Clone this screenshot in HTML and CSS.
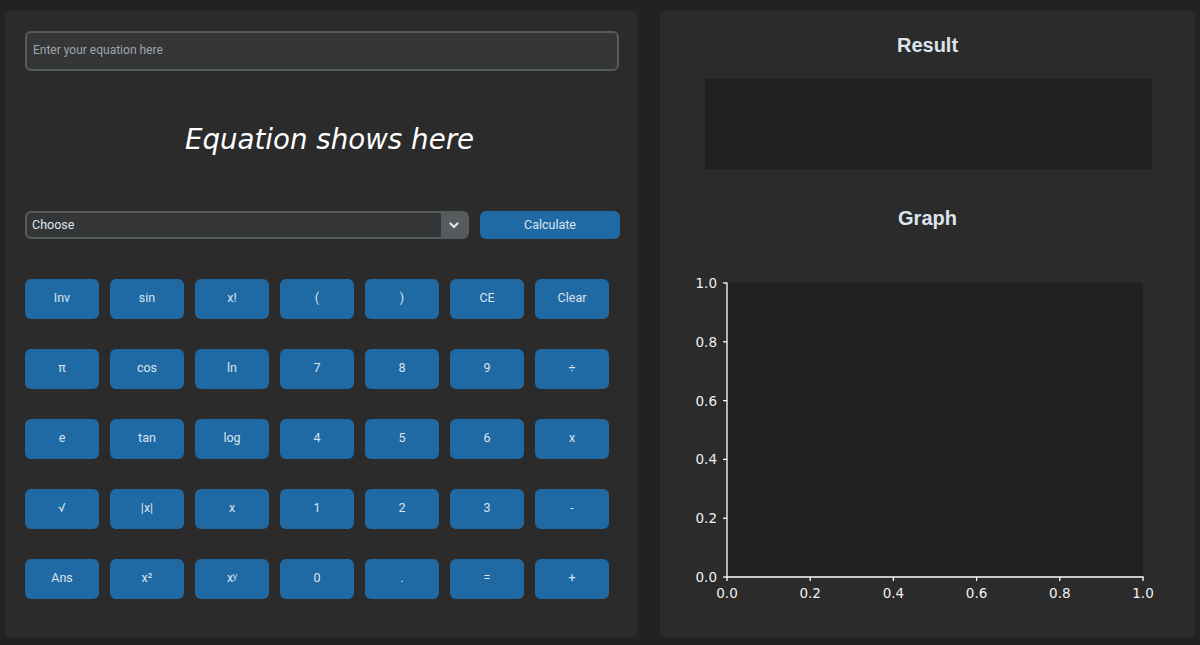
FILE: index.html
```html
<!DOCTYPE html>
<html lang="en">
<head>
<meta charset="utf-8">
<title>Calculator</title>
<link rel="stylesheet" href="styles.css">
</head>
<body>
<main class="app">
  <section class="panel left">
    <input class="eq-input" type="text" placeholder="Enter your equation here">
    <div class="eq-display">Equation shows here</div>
    <div class="action-row">
      <div class="select">
        <span class="select-text">Choose</span>
        <span class="select-arrow">
          <svg width="10" height="7" viewBox="0 0 10 7"><polyline points="1.5,1.5 5,5 8.5,1.5" fill="none" stroke="#dce4ee" stroke-width="2.2" stroke-linecap="round" stroke-linejoin="round"/></svg>
        </span>
      </div>
      <button class="btn calc">Calculate</button>
    </div>
    <div class="keys">
      <button class="btn key">Inv</button><button class="btn key">sin</button><button class="btn key">x!</button><button class="btn key">(</button><button class="btn key">)</button><button class="btn key">CE</button><button class="btn key">Clear</button>
      <button class="btn key">π</button><button class="btn key">cos</button><button class="btn key">ln</button><button class="btn key">7</button><button class="btn key">8</button><button class="btn key">9</button><button class="btn key">÷</button>
      <button class="btn key">e</button><button class="btn key">tan</button><button class="btn key">log</button><button class="btn key">4</button><button class="btn key">5</button><button class="btn key">6</button><button class="btn key">x</button>
      <button class="btn key">√</button><button class="btn key">|x|</button><button class="btn key">x</button><button class="btn key">1</button><button class="btn key">2</button><button class="btn key">3</button><button class="btn key">-</button>
      <button class="btn key">Ans</button><button class="btn key">x²</button><button class="btn key">xʸ</button><button class="btn key">0</button><button class="btn key">.</button><button class="btn key">=</button><button class="btn key">+</button>
    </div>
  </section>
  <section class="panel right">
    <h2 class="title">Result</h2>
    <div class="result-box"></div>
    <h2 class="title graph-title">Graph</h2>
    <svg class="plot" width="535" height="380" viewBox="0 0 535 380">
      <rect x="67" y="53" width="416" height="294" fill="#202020"/>
      <g stroke="#ffffff" stroke-width="1.3" fill="none">
        <line x1="67" y1="52.4" x2="67" y2="347.6"/>
        <line x1="66.4" y1="347" x2="483.6" y2="347"/>
        <line x1="63" y1="53" x2="67" y2="53"/>
        <line x1="63" y1="111.8" x2="67" y2="111.8"/>
        <line x1="63" y1="170.6" x2="67" y2="170.6"/>
        <line x1="63" y1="229.4" x2="67" y2="229.4"/>
        <line x1="63" y1="288.2" x2="67" y2="288.2"/>
        <line x1="63" y1="347" x2="67" y2="347"/>
        <line x1="67" y1="347" x2="67" y2="351"/>
        <line x1="150.2" y1="347" x2="150.2" y2="351"/>
        <line x1="233.4" y1="347" x2="233.4" y2="351"/>
        <line x1="316.6" y1="347" x2="316.6" y2="351"/>
        <line x1="399.8" y1="347" x2="399.8" y2="351"/>
        <line x1="483" y1="347" x2="483" y2="351"/>
      </g>
      <g class="tick-label" text-anchor="end">
        <text x="57" y="58">1.0</text>
        <text x="57" y="116.8">0.8</text>
        <text x="57" y="175.6">0.6</text>
        <text x="57" y="234.4">0.4</text>
        <text x="57" y="293.2">0.2</text>
        <text x="57" y="352">0.0</text>
      </g>
      <g class="tick-label" text-anchor="middle">
        <text x="67" y="368">0.0</text>
        <text x="150.2" y="368">0.2</text>
        <text x="233.4" y="368">0.4</text>
        <text x="316.6" y="368">0.6</text>
        <text x="399.8" y="368">0.8</text>
        <text x="483" y="368">1.0</text>
      </g>
    </svg>
  </section>
</main>
</body>
</html>
```

FILE: styles.css
```css
* {
  box-sizing: border-box;
}

html, body {
  margin: 0;
  padding: 0;
  background: #222222;
}

body {
  width: 1200px;
  height: 645px;
  overflow: hidden;
  font-family: Roboto, "Liberation Sans", sans-serif;
}

.app {
  display: flex;
  gap: 22px;
  padding: 11px 5px 7px 5px;
  height: 645px;
}

.panel {
  background: #2b2b2b;
  border-radius: 6px;
  height: 627px;
}

.left {
  width: 633px;
  padding: 20px 19px 0 20px;
  display: flex;
  flex-direction: column;
}

.eq-input {
  display: block;
  width: 594px;
  height: 40px;
  margin: 0;
  padding: 0 6px 2px 6px;
  background: #343638;
  border: 2px solid #565b5e;
  border-radius: 6px;
  color: #dce4ee;
  font-family: Roboto, "Liberation Sans", sans-serif;
  font-size: 12px;
  outline: none;
}

.eq-input::placeholder {
  color: #a0a4a9;
}

.eq-display {
  margin-top: 52px;
  height: 34px;
  line-height: 34px;
  text-align: center;
  font-family: "DejaVu Sans", sans-serif;
  font-style: italic;
  font-size: 27.7px;
  color: #ffffff;
  padding-left: 15px;
}

.action-row {
  margin-top: 54px;
  display: flex;
  gap: 11px;
  height: 28px;
}

.select {
  flex: none;
  width: 444px;
  height: 28px;
  display: flex;
  background: #343638;
  border: 2px solid #565b5e;
  border-radius: 6px;
  overflow: hidden;
}

.select-text {
  flex: 1;
  padding-left: 5px;
  line-height: 24px;
  font-size: 12.5px;
  color: #dce4ee;
}

.select-arrow {
  width: 26px;
  background: #565b5e;
  display: flex;
  align-items: center;
  justify-content: center;
  padding-top: 1px;
}

.btn {
  margin: 0;
  padding: 0 0 3px 0;
  border: none;
  background: #1f6aa5;
  color: #dce4ee;
  border-radius: 6px;
  font-family: Roboto, "Liberation Sans", sans-serif;
  font-size: 12.5px;
}

.calc {
  flex: none;
  width: 140px;
  height: 28px;
  padding-bottom: 2px;
}

.keys {
  margin-top: 40px;
  display: grid;
  grid-template-columns: repeat(7, 74px);
  grid-auto-rows: 40px;
  column-gap: 11px;
  row-gap: 30px;
}

.key {
  height: 40px;
}

.right {
  width: 535px;
  padding-top: 22px;
  display: flex;
  flex-direction: column;
}

.title {
  margin: 0;
  height: 24px;
  line-height: 24px;
  text-align: center;
  font-family: "Liberation Sans", Arial, sans-serif;
  font-weight: bold;
  font-size: 20px;
  color: #dce4ee;
}

.result-box {
  margin: 22px 43px 0 45px;
  height: 90px;
  background: #202020;
}

.graph-title {
  margin-top: 37px;
}

.plot {
  display: block;
  margin-top: 0;
}

.tick-label {
  font-family: "DejaVu Sans", sans-serif;
  font-size: 13.5px;
  fill: #f0f0f0;
}
```
